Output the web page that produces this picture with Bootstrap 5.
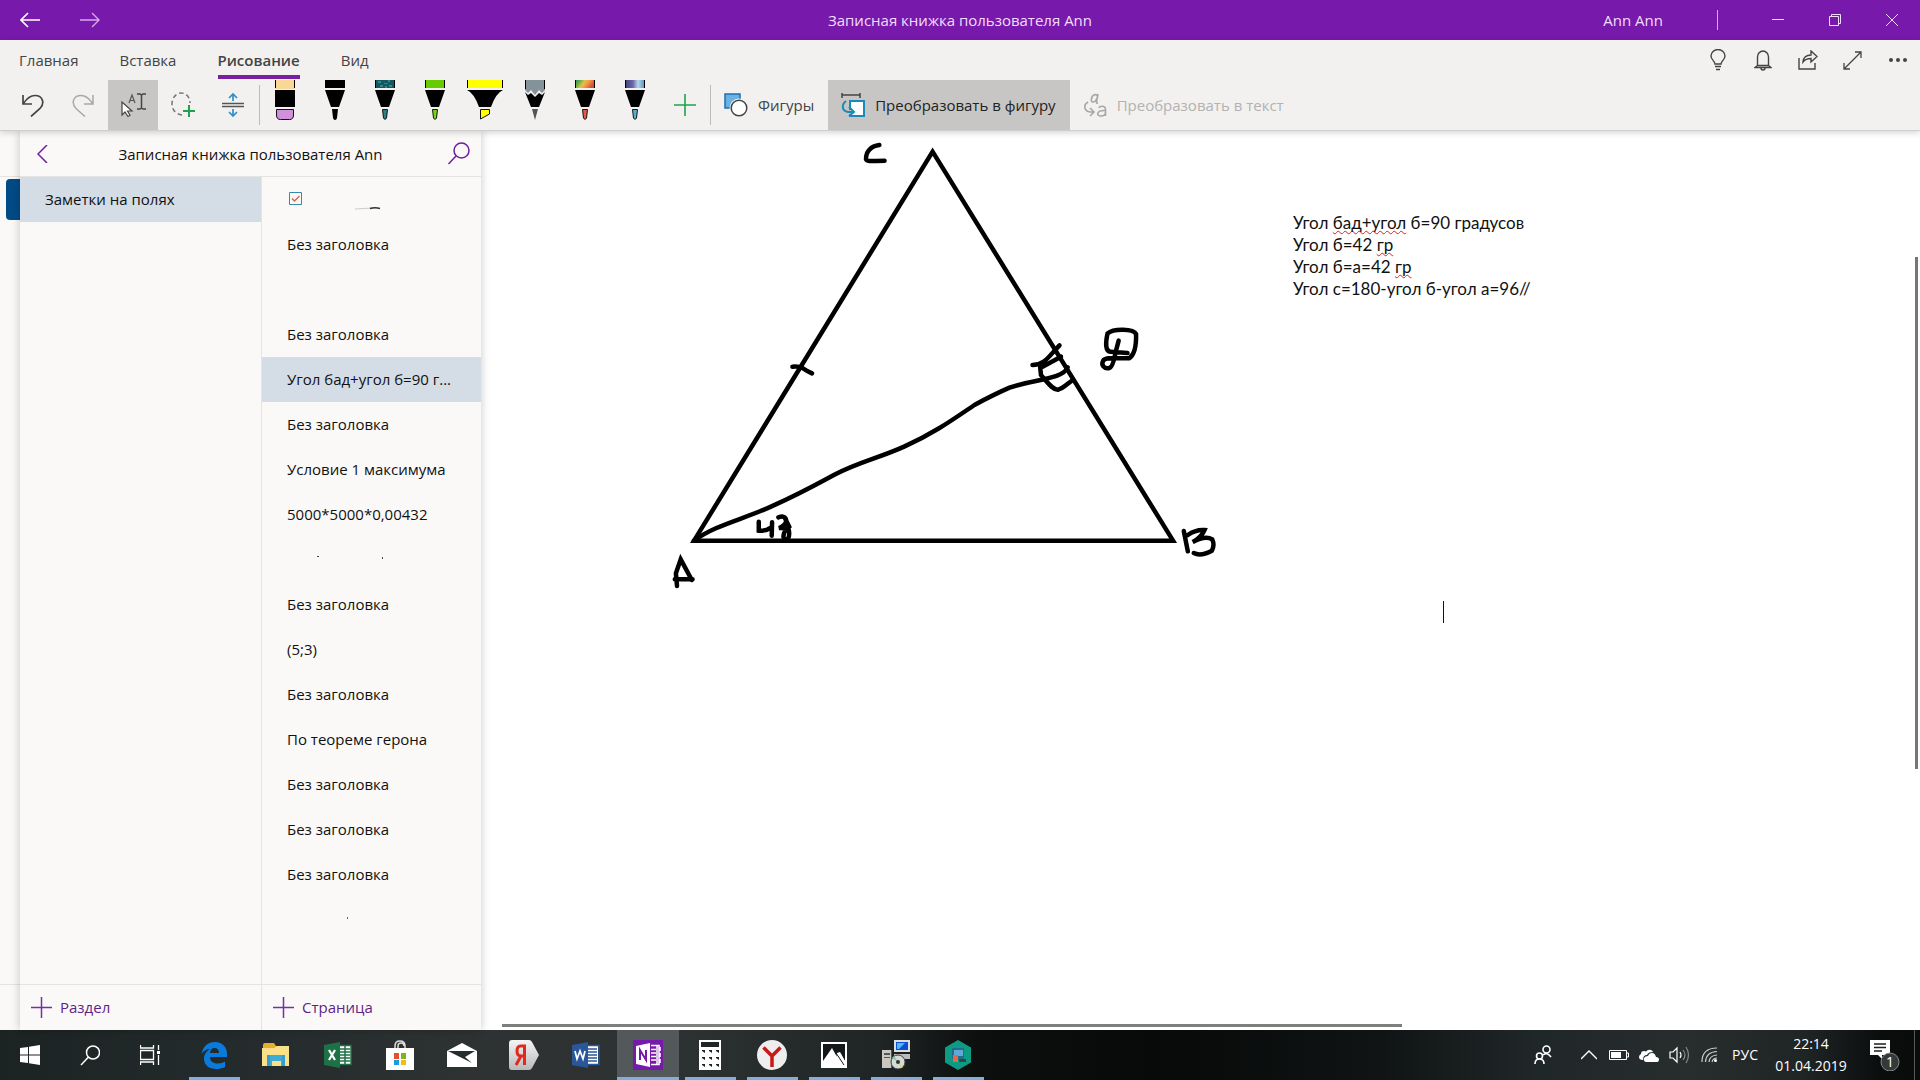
<!DOCTYPE html>
<html lang="ru">
<head>
<meta charset="utf-8">
<meta name="viewport" content="width=device-width, initial-scale=1">
<title>Записная книжка пользователя Ann</title>
<link href="https://cdn.jsdelivr.net/npm/bootstrap@5.3.0/dist/css/bootstrap.min.css" rel="stylesheet">
<style>
:root{--purple:#7719aa;--ribbon:#f2f1f0;--panel:#faf9f8;--sel:#d4dde6;--rule:#e6e4e3}
body{font-family:"Open Sans","Noto Sans",sans-serif;font-size:15px;line-height:20px;color:#111}
button{font:inherit;color:inherit;border:0;background:none;padding:0}
a{color:inherit;text-decoration:none}
svg{display:block;flex:none}
.titlebar{height:40px;background:var(--purple);color:#f3dcff}
.titlebar .caption{left:0;right:0}
.tbtn{width:60px;height:40px;display:flex;align-items:center;justify-content:center}
.wbtn{width:57px}
.userlink{margin-right:54px}
.tdiv{width:1px;height:20px;background:#d9a9ee;margin-right:7px}
.ribbon{background:var(--ribbon);color:#444;border-bottom:1px solid #cfcfcf;box-shadow:0 2px 6px rgba(0,0,0,.16);z-index:3}
.ribbon .nav{padding-left:-1px}
.ribbon .nav-link{padding:10px 0;margin:0 22px 0 19px;color:#444;height:40px;position:relative}
.ribbon .nav-link.active{font-weight:600}
.ribbon .nav-link.active::after{content:"";position:absolute;left:1px;right:0;bottom:1px;height:4px;background:#7a1fa0}
.quick{width:45px;height:40px;display:flex;align-items:center;justify-content:center}
.tools{height:50px;padding-left:8px}
.tool{width:50px;height:50px;display:flex;align-items:center;justify-content:center}
.tool.pressed,.wide.pressed{background:#c7c6c4;color:#222}
.sep{width:1px;height:40px;background:#bcbbba}
.pens{margin-left:1px}
.pen{width:50px;height:50px;display:flex;justify-content:center;align-items:flex-start}
.wide{height:50px;display:flex;align-items:center;gap:10px;padding:0 14px 0 13px}
.wide:disabled{color:#b3b2b1}
.strip{width:20px;background:var(--panel)}
.strip .head,.side .head{height:46px;border-bottom:1px solid var(--rule);flex:none}
.sidefoot{height:46px;border-top:1px solid var(--rule)}
.booktab{width:14px;height:41px;margin:2px 0 0 auto;background:#004b87;border-radius:4px 0 0 4px}
.side{width:461px;flex:none;background:var(--panel);box-shadow:0 0 9px rgba(0,0,0,.22);z-index:2}
.side .head button{width:44px;height:45px;display:flex;align-items:center;justify-content:center}
.sections{width:242px;flex:none;border-right:1px solid var(--rule)}
.side .list-group-item{height:45px;padding:12px 20px 12px 25px;border:0;border-radius:0;background:none;color:#111;white-space:nowrap}
.side .list-group-item.active{background:var(--sel);color:#111;margin:0}
.addbtn{width:100%;height:44px;display:flex;align-items:center;gap:8px;padding-left:11px;color:#5f1f87}
.sheet{background:#fff;min-width:0}
.ink{position:absolute;left:179px;top:-1px}
.ink path{vector-effect:non-scaling-stroke}
.note{position:absolute;left:812px;top:81px;font-family:Lato,"Open Sans",sans-serif;font-size:17px;line-height:22px;white-space:nowrap}
.note u{text-decoration:underline wavy #e02020 1px;text-underline-offset:1px;text-decoration-skip-ink:none}
.caret{position:absolute;left:962px;top:470px;width:1px;height:22px;background:#111}
.vbar{position:absolute;right:2px;top:126px;width:3px;height:57%;background:#767676}
.hbar{position:absolute;left:21px;bottom:3px;width:900px;height:3px;background:#7d7f7d}
.taskbar{height:50px;color:#fff;font-size:14px;background:linear-gradient(90deg,#1c2323 0,#242b2c 12%,#2e3233 25%,#2c3132 36%,#1f2425 46%,#0d0e0e 51%,#080909 60%,#101414 72%,#202728 80%,#282d2e 88%,#1f2425 94%,#0b0d0d 98%,#0a0b0b 100%)}
.sys{width:60px;height:50px;display:flex;align-items:center;justify-content:center}
.taskview{margin-right:3px}
.app{width:62px;height:50px;position:relative;display:flex;align-items:center;justify-content:center}
.app.running::after{content:"";position:absolute;left:6px;right:5px;bottom:0;height:3px;background:#80b0d9}
.app.front{background:#53585a}
.app.front::after{left:0;right:0}
.tray{height:50px;width:30px;display:flex;align-items:center;justify-content:center}
.clock{width:90px;line-height:22px}
.center{width:58px}
.peek{width:6px;border-left:1px solid #55595a}
</style>
<script src="https://cdn.jsdelivr.net/npm/bootstrap@5.3.0/dist/js/bootstrap.bundle.min.js" defer></script>
</head>
<body class="d-flex flex-column vh-100 overflow-hidden">

<header class="titlebar d-flex align-items-center position-relative">
  <button class="tbtn" aria-label="Назад"><svg width="20" height="16" fill="none" stroke="#fff" stroke-width="1.6"><path d="M20 8H1M8 1L1 8l7 7"/></svg></button>
  <button class="tbtn" aria-label="Вперёд"><svg width="20" height="16" fill="none" stroke="#d9a9ee" stroke-width="1.4"><path d="M0 8h19M12 1l7 7-7 7"/></svg></button>
  <div class="caption position-absolute text-center pe-none">Записная книжка пользователя Ann</div>
  <div class="ms-auto d-flex align-items-center">
    <a href="#" class="userlink">Ann Ann</a>
    <span class="tdiv"></span>
    <button class="tbtn wbtn ms-4" aria-label="Свернуть"><svg width="12" height="12" stroke="#f3dcff"><path d="M0 5.5h12"/></svg></button>
    <button class="tbtn wbtn" aria-label="Развернуть"><svg width="12" height="12" fill="none" stroke="#f3dcff"><path d="M.5 2.5h9v9h-9zM2.5 2V.5h9v9H10"/></svg></button>
    <button class="tbtn wbtn" aria-label="Закрыть"><svg width="12" height="12" stroke="#f3dcff"><path d="M0 0l12 12M12 0L0 12"/></svg></button>
  </div>
</header>

<div class="ribbon position-relative">
  <div class="d-flex justify-content-between">
    <nav class="nav">
      <a class="nav-link" href="#">Главная</a>
      <a class="nav-link" href="#">Вставка</a>
      <a class="nav-link active" aria-current="page" href="#">Рисование</a>
      <a class="nav-link" href="#">Вид</a>
    </nav>
    <div class="d-flex">
      <button class="quick" aria-label="Подсказка"><svg width="16" height="22" fill="none" stroke="#444" stroke-width="1.4"><path d="M5 15c0-3-4-4-4-8a7 6.500 0 0 1 14 0c0 4-4 5-4 8zM5 17.500h6M6 20.500h4"/></svg></button>
      <button class="quick" aria-label="Уведомления"><svg width="18" height="21" fill="none" stroke="#444" stroke-width="1.400"><path d="M3.500 15.500V7a5.500 6 0 0 1 11 0v8.500M1 17.500l2.500-2h11l2.500 2zM7 18a2 2 0 0 0 4 0"/></svg></button>
      <button class="quick" aria-label="Поделиться"><svg width="20" height="20" fill="none" stroke="#444" stroke-width="1.400"><path d="M1 8v11h16v-6M5 12c.5-5 4-7 8-7V1l6 5.500-6 5.500V8.500c-4 0-6 1-8 3.500z"/></svg></button>
      <button class="quick" aria-label="На весь экран"><svg width="19" height="19" fill="none" stroke="#444" stroke-width="1.300"><path d="M1 18L18 1M12 1h6v6M1 12v6h6"/></svg></button>
      <button class="quick" aria-label="Ещё"><svg width="20" height="6" fill="#444"><circle cx="3" cy="3" r="2"/><circle cx="10" cy="3" r="2"/><circle cx="17" cy="3" r="2"/></svg></button>
    </div>
  </div>
  <div class="tools d-flex align-items-center">
    <button class="tool" aria-label="Отменить"><svg width="22" height="23" fill="none" stroke="#444" stroke-width="1.700"><path d="M1 1v9h9M1.500 9.500C5 4 9 1.500 13 1.500c8 0 10 8 5 13L9 22.500"/></svg></button>
    <button class="tool" aria-label="Вернуть"><svg width="22" height="23" fill="none" stroke="#a9a8a7" stroke-width="1.500"><path d="M21 1v9h-9M20.500 9.500C17 4 13 1.500 9 1.500c-8 0-10 8-5 13l9 8"/></svg></button>
    <button class="tool pressed" aria-label="Выделить объекты"><svg width="26" height="26" viewBox="0 0 26 26"><path d="M2 10v13l3-3 3 4.500 2-1.200-2.500-4.300H12z" fill="#fff" stroke="#444" stroke-width="1.200"/><path d="M17 2h3l1.500 1L23 2h3M17 17h3l1.500-1 1.500 1h3M21.500 3v13" fill="none" stroke="#444" stroke-width="1.500"/><path d="M9 11l3-8 3 8M10 8.500h4" fill="none" stroke="#555" stroke-width="1.200"/></svg></button>
    <button class="tool" aria-label="Лассо"><svg width="26" height="26" viewBox="0 0 26 26" fill="none"><path d="M12 23C5 22 2 17 2 12 2 6 6 1 11 1c6 0 9 5 9 10" stroke="#777" stroke-width="1.500" stroke-dasharray="4.500 3"/><path d="M13 19h12M19 13v12" stroke="#1fa34a" stroke-width="2"/></svg></button>
    <button class="tool" aria-label="Вставить пространство"><svg width="22" height="26" viewBox="0 0 22 26" fill="none"><path d="M0 11.500h22M0 14.500h22" stroke="#555" stroke-width="1.500"/><path d="M11 9V2M7 6l4-4 4 4M11 17v7M7 20l4 4 4-4" stroke="#2e8fcb" stroke-width="1.700"/></svg></button>
    <div class="pens d-flex align-items-center">
    <span class="sep"></span>
    <button class="pen" aria-label="Ластик"><svg width="20" height="41"><path fill="#f8d896" d="M0 0h20v9H0z"/><path fill="#000" d="M0 0h1v8H0zM19 0h1v8h-1zM0 10h20v17H0z"/><path d="M1.500 29.500h17V35q0 4.500-4 4.500h-9q-4 0-4-4.500z" fill="#d090dc" stroke="#111"/></svg></button>
    <button class="pen" aria-label="Чёрное перо"><svg width="20" height="41"><path d="M0 0h20v8H0zM0 10h20l-6 17H6zM7 29h6l-1 9q-.5 2-2 2t-2-2z"/></svg></button>
    <button class="pen" aria-label="Бирюзовое перо"><svg width="20" height="41"><path fill="#145860" d="M0 0h20v8H0z"/><path fill="#31898c" d="M3 1h3v2H3zM9 3h4v1H9zM14 5h3v2h-3zM5 5h3v2H5zM13 0h2v2h-2zM10 6h2v2h-2z"/><path d="M0 0h1v8H0zM19 0h1v8h-1zM0 10h20l-6 17H6z"/><path d="M7.500 29.500h5L11.500 38q-1.500 3-3 0z" fill="#2d8088" stroke="#111"/></svg></button>
    <button class="pen" aria-label="Зелёное перо"><svg width="20" height="41"><path fill="#66cc00" d="M0 0h20v8H0z"/><path d="M0 0h1v8H0zM19 0h1v8h-1zM0 10h20l-6 17H6z"/><path d="M7.500 29.500h5L11.500 38q-1.500 3-3 0z" fill="#76d810" stroke="#111"/></svg></button>
    <button class="pen" aria-label="Жёлтый маркер"><svg width="36" height="41"><path fill="#ff0" d="M0 0h36v8H0z"/><path d="M0 0h1v8H0zM35 0h1v8h-1zM0 10h36q-7 3-12 17H12Q7 13 0 10z"/><path d="M13.500 29.500h9V34l-9 5z" fill="#ff0" stroke="#111"/></svg></button>
    <button class="pen" aria-label="Карандаш"><svg width="20" height="41"><path fill="#84929a" d="M0 0h20v10l-3 3-3-3-4 5-4-5-3 3-3-3z"/><path d="M0 0h1v9H0zM19 0h1v9h-1zM0 12l3 3 3-2 4 4 4-4 3 2 3-3-6 15H6z"/><path d="M7 29h6l-3 11z" fill="#555"/></svg></button>
    <button class="pen" aria-label="Радужное перо"><svg width="20" height="41"><defs><linearGradient id="rb" y2=".3"><stop stop-color="#35806a"/><stop offset=".25" stop-color="#5fae48"/><stop offset=".5" stop-color="#e8c04c"/><stop offset=".75" stop-color="#f08a40"/><stop offset="1" stop-color="#d84a38"/></linearGradient></defs><path fill="url(#rb)" d="M0 0h20v8H0z"/><path d="M0 0h1v8H0zM19 0h1v8h-1zM0 10h20l-6 17H6z"/><path d="M7.500 29.500h5L11.500 38q-1.500 3-3 0z" fill="#e85a48" stroke="#111"/></svg></button>
    <button class="pen" aria-label="Перо «Галактика»"><svg width="20" height="41"><defs><linearGradient id="gx"><stop stop-color="#3a3f78"/><stop offset=".4" stop-color="#6f6aa8"/><stop offset=".65" stop-color="#b8d8ea"/><stop offset="1" stop-color="#4a90c0"/></linearGradient></defs><path fill="url(#gx)" d="M0 0h20v8H0z"/><path d="M0 0h1v8H0zM19 0h1v8h-1zM0 10h20l-6 17H6z"/><path d="M7.500 29.500h5L11.500 38q-1.500 3-3 0z" fill="#5bb0d0" stroke="#111"/></svg></button>
    <button class="tool" aria-label="Добавить перо"><svg width="22" height="22" stroke="#1fa34a" stroke-width="1.600"><path d="M0 11h22M11 0v22"/></svg></button>
    <span class="sep"></span>
    </div>
    <button class="wide"><svg width="24" height="24" viewBox="0 0 24 24"><path d="M1 1h15v14H1z" fill="#6cb0e4" stroke="#1b6fb5" stroke-width="1.500"/><circle cx="15" cy="15" r="9.500" fill="#f2f1f0"/><circle cx="15" cy="15" r="7.800" fill="#fff" stroke="#444" stroke-width="1.500"/></svg>Фигуры</button>
    <button class="wide pressed"><svg width="24" height="24" viewBox="0 0 24 24" fill="none"><path d="M9 8h14v15H9z" fill="#fff" stroke="#1a8ab8" stroke-width="2"/><path d="M1 2h18M1 0v5M19 0v5" stroke="#444" stroke-width="1.500"/><path d="M4 8c-4 4-3 10 3 11h5" stroke="#c7c6c4" stroke-width="4"/><path d="M5 8c-5 4-4 10 2 11h4M8 14l5 5-5 4" stroke="#1a8ab8" stroke-width="2"/></svg>Преобразовать в фигуру</button>
    <button class="wide" disabled><svg width="24" height="24" viewBox="0 0 24 24" fill="none" stroke="#a8a7a6" stroke-width="1.600"><path d="M15 1l-1.500 8q0 1.500 1.500 1M14.500 3.500c-1-3-5-2.500-6 2s3 5 5.500 0M15.500 14.500c4-2 7-1.500 7 2v6.500M22.500 17.500c-10-.5-9 6-4.500 5.500 3 0 4.500-2 4.500-4M5 9c-5 3-4 9 2 10h3M7 15l4 4-4 4"/></svg>Преобразовать в текст</button>
  </div>
</div>

<div class="d-flex flex-grow-1" style="min-height:0">
  <div class="strip d-flex flex-column"><div class="head"></div><div class="booktab"></div><div class="sidefoot mt-auto"></div></div>

  <aside class="side d-flex flex-column position-relative">
    <div class="head d-flex align-items-center justify-content-between">
      <button aria-label="Назад к записным книжкам"><svg width="11" height="18" fill="none" stroke="#6d1f9c" stroke-width="1.500"><path d="M10 0L1 9l9 9"/></svg></button>
      <span>Записная книжка пользователя Ann</span>
      <button aria-label="Поиск"><svg width="22" height="23" fill="none" stroke="#6d1f9c" stroke-width="1.500"><circle cx="13.500" cy="8.500" r="7.500"/><path d="M8 14l-7.500 8"/></svg></button>
    </div>
    <div class="d-flex flex-grow-1" style="min-height:0">
      <div class="sections d-flex flex-column">
        <div class="list-group"><a href="#" class="list-group-item active">Заметки на полях</a></div>
        <div class="sidefoot mt-auto"><button class="addbtn"><svg width="21" height="21" stroke="#7a2ca8" stroke-width="1.500"><path d="M0 10.500h21M10.500 0v21"/></svg>Раздел</button></div>
      </div>
      <div class="pages d-flex flex-column flex-grow-1" style="min-width:0">
        <div class="list-group">
          <a href="#" class="list-group-item" aria-label="Страница с флажком"><svg width="100" height="22" viewBox="0 0 100 22" fill="none"><path d="M2.500 3.500h12v12h-12z" stroke="#3d86ac"/><path d="M5 9.500l2.500 2.500 5-5" stroke="#d66a4a" stroke-width="1.500"/><path d="M68 20l18-1" stroke="#ccc"/><path d="M83 19.500q5-1.500 10 0" stroke="#333" stroke-width="1.500"/></svg></a>
          <a href="#" class="list-group-item">Без заголовка</a>
          <a href="#" class="list-group-item" aria-label="Пустая страница"></a>
          <a href="#" class="list-group-item">Без заголовка</a>
          <a href="#" class="list-group-item active">Угол бад+угол б=90 г...</a>
          <a href="#" class="list-group-item">Без заголовка</a>
          <a href="#" class="list-group-item">Условие 1 максимума</a>
          <a href="#" class="list-group-item">5000*5000*0,00432</a>
          <a href="#" class="list-group-item" aria-label="Рукописная страница"><svg width="100" height="20"><path d="M30 7h2v1h-2zM95 8h1v2h-1z" fill="#444"/></svg></a>
          <a href="#" class="list-group-item">Без заголовка</a>
          <a href="#" class="list-group-item">(5;3)</a>
          <a href="#" class="list-group-item">Без заголовка</a>
          <a href="#" class="list-group-item">По теореме герона</a>
          <a href="#" class="list-group-item">Без заголовка</a>
          <a href="#" class="list-group-item">Без заголовка</a>
          <a href="#" class="list-group-item">Без заголовка</a>
          <a href="#" class="list-group-item" aria-label="Рукописная страница"><svg width="100" height="20"><path d="M60 8h1v2h-1z" fill="#666"/></svg></a>
        </div>
        <div class="sidefoot mt-auto"><button class="addbtn"><svg width="21" height="21" stroke="#7a2ca8" stroke-width="1.500"><path d="M0 10.500h21M10.500 0v21"/></svg>Страница</button></div>
      </div>
    </div>
  </aside>

  <main class="sheet flex-grow-1 position-relative overflow-hidden">
    <svg class="ink" width="580" height="470" viewBox="0 0 1568 1410" preserveAspectRatio="none" fill="none" stroke="#000" stroke-width="4.500" stroke-linecap="round" stroke-linejoin="miter">
      <path d="M737 65L92 1232H1387z"/>
      <path d="M92 1232C150 1185 220 1170 300 1130C380 1090 420 1065 470 1035C540 995 590 985 660 950C740 910 790 870 850 825C900 795 920 785 945 773C1010 748 1090 748 1102 712"/>
      <path d="M358 710Q375 708 385 714Q395 722 411 730"/>
      <path d="M1007 705C1040 705 1050 680 1080 646M1084 680L1028 714L1030 735C1050 760 1062 780 1076 779C1090 776 1100 762 1116 750"/>
      <path d="M1240 632L1232 665C1228 690 1222 712 1215 714C1200 718 1192 705 1198 692C1205 680 1230 686 1268 685C1282 675 1288 650 1287 612C1280 595 1225 595 1210 610C1204 640 1204 664 1218 665L1264 669"/>
      <path d="M593 45C570 48 556 65 557 88C560 97 580 92 607 92"/>
      <path d="M46 1368L43 1330L56 1288L86 1350M40 1348L88 1348"/>
      <path d="M267 1175L267 1202Q285 1205 300 1193M303 1177L302 1217M320 1162Q338 1155 341 1170Q342 1184 322 1194L347 1195Q352 1215 346 1226Q338 1233 334 1222Q332 1205 349 1190L338 1165"/>
      <path d="M1416 1203L1427 1264M1427 1215Q1448 1198 1472 1200Q1462 1225 1440 1236Q1475 1215 1493 1228Q1500 1245 1492 1262Q1462 1280 1443 1269"/>
    </svg>
    <div class="note">
      <div>Угол <u>бад+угол</u> б=90 градусов</div>
      <div>Угол б=42 <u>гр</u></div>
      <div>Угол б=а=42 <u>гр</u></div>
      <div>Угол с=180-угол б-угол а=96//</div>
    </div>
    <div class="caret"></div>
    <div class="vbar"></div>
    <div class="hbar"></div>
  </main>
</div>

<footer class="taskbar d-flex">
  <button class="sys" aria-label="Пуск"><svg width="20" height="20" fill="#fff"><path d="M0 3l8-1v7.500H0zM9 1.800L20 0v9.500H9zM0 10.500h8V18l-8-1zM9 10.500h11V20L9 18.200z"/></svg></button>
  <button class="sys" aria-label="Поиск"><svg width="20" height="21" fill="none" stroke="#fff" stroke-width="1.500"><circle cx="13" cy="7.500" r="6.500"/><path d="M8.500 12L1 20"/></svg></button>
  <button class="sys taskview" aria-label="Представление задач"><svg width="20" height="20" fill="none" stroke="#fff" stroke-width="1.300"><path d="M.5 5.500h13v9H.5zM.5 0v3h13V0M.5 20v-3h13v3M18.500 0v5M18.500 10v10"/><path d="M17 6h3v3h-3z" fill="#fff" stroke="none"/></svg></button>
  <button class="app running" aria-label="Edge"><svg width="26" height="27" viewBox="0 0 26 27"><path fill="#0a7bdc" d="M.5 12C2 4 7 0 14 0c8 0 12 6 12 12v3H9c0 5 4 6.500 8 6.500 3 0 5-.8 7-2V25c-3 1.500-6 2-9 2C8 27 3 23 3 16.500 3 12 6 8.500 9.500 7 5.500 7 2 9 .5 12zM9 11h9c0-3-1.500-5-4.500-5S9.500 8 9 11z"/></svg></button>
  <button class="app" aria-label="Проводник"><svg width="28" height="24"><path fill="#e8ae2e" d="M1 2q0-2 2-2h9l2 3h13v7H1z"/><path fill="#fbe08a" d="M0 5h12l3-2h12v20H0z"/><path fill="#3fabd8" d="M5 23V12h18v11h-4v-5h-9v5z"/><path fill="#2a8dbb" d="M5 12h3v11H5zM20 12h3v11h-3z" opacity=".4"/></svg></button>
  <button class="app" aria-label="Excel"><svg width="28" height="26"><path fill="#fff" d="M14 3h13v20H14z"/><path fill="#1d7245" d="M0 3l16-3v26L0 23z"/><path stroke="#1d7245" stroke-width="1.500" fill="none" d="M16 3.500h11v19H16M16 7h10M16 10h10M16 13h10M16 16h10M16 19h10M21 4v18"/><path stroke="#fff" stroke-width="2.200" d="M5 8l6 10M11 8L5 18"/></svg></button>
  <button class="app" aria-label="Microsoft Store"><svg width="30" height="30"><path fill="none" stroke="#ddd" stroke-width="1.500" d="M10 8V6q0-5 5-5t5 5v2M13 8V6q0-3 3-3t3 3"/><path fill="#fff" d="M1 8h28v22H1z"/><path fill="#e8502a" d="M9 13h5v6H9z"/><path fill="#7cb61b" d="M16 13h5v6h-5z"/><path fill="#1a9ae0" d="M9 20h5v5H9z"/><path fill="#f0bd1c" d="M16 20h5v5h-5z"/></svg></button>
  <button class="app" aria-label="Почта"><svg width="30" height="24"><path fill="#fff" d="M0 8L15 0l15 8v16H0z"/><path fill="#272c2d" d="M1 8h27l-10 6 7 6L13 14z"/></svg></button>
  <button class="app" aria-label="Яндекс"><svg width="30" height="30"><defs><linearGradient id="ya" x2="0" y2="1"><stop stop-color="#f4f4f4"/><stop offset="1" stop-color="#b9b9b9"/></linearGradient></defs><path fill="url(#ya)" d="M3 0h17q2 0 3 2l7 13-7 13q-1 2-3 2H3q-3 0-3-3V3q0-3 3-3z"/><path fill="none" stroke="#e02a20" stroke-width="3" d="M15.500 25V6h-4Q8 6 8 11t4 5h3M12 16L7 25"/></svg></button>
  <button class="app" aria-label="Word"><svg width="28" height="26"><path fill="#fff" d="M14 3h12v20H14z"/><path fill="#2a579a" d="M0 3l16-3v26L0 23z"/><path stroke="#2a579a" stroke-width="1.500" fill="none" d="M16 3.500h11v19H16M16 7h9M16 10h9M16 13h9M16 16h9M16 19h9"/><path stroke="#fff" stroke-width="1.700" fill="none" d="M3 9l2 8 3-8 3 8 2-8"/></svg></button>
  <button class="app running front" aria-label="OneNote"><svg width="30" height="30"><path fill="#7719aa" d="M0 0h30v30H0z"/><path fill="#fff" d="M3 6l14-3v24L3 24z"/><path stroke="#fff" stroke-width="1.500" fill="none" d="M18 5.500h8v19h-8M18 9.500h5M18 13h5M18 16.500h5M18 20h5M24 5v20M27 7v4M27 13v4M27 19v4"/><path stroke="#7719aa" stroke-width="2" fill="none" d="M7 20V10l6 10V10"/></svg></button>
  <button class="app running" aria-label="Калькулятор"><svg width="22" height="30"><path fill="#fff" d="M0 0h22v30H0z"/><path fill="#1f2526" d="M2 2h18v5H2zM3 10h3v3l-3-2zM10 10h3v3l-3-2zM17 10h3v3l-3-2zM3 17h3v3l-3-2zM10 17h3v3l-3-2zM17 17h3v3l-3-2zM3 24h3v3l-3-2zM10 24h3v3l-3-2zM17 24h3v3l-3-2z"/></svg></button>
  <button class="app running" aria-label="Яндекс.Браузер"><svg width="30" height="30"><circle cx="15" cy="15" r="15" fill="#eee"/><path d="M6.500 7.500L15 16l8.500-8.500M15 15v12" stroke="#c81818" stroke-width="3.500" fill="none"/></svg></button>
  <button class="app running" aria-label="Фотографии"><svg width="26" height="26"><path fill="#fff" d="M0 0h26v26H0z"/><path fill="#151818" d="M2 2h22v17l-5-8-3 4-5-9-9 13z"/><path fill="#fff" d="M16 11l3-1 5 9v4H14z"/><path stroke="#151818" d="M15 11l8 12"/></svg></button>
  <button class="app running" aria-label="Установщик"><svg width="28" height="30"><path fill="#c8c8c0" d="M0 10h10v18H0z"/><path fill="#555" d="M2 13h6v2H2zM2 17h6v1H2zM9 10h1v18H9z"/><path fill="#ddd" d="M12 0h16v12H12z"/><path fill="#bbb" d="M12 14h16v5H12z"/><path fill="#0a50d0" d="M14 2h12v8H14z"/><path fill="#50b8f8" d="M15 3h8l-6 6h-2z"/><circle cx="16" cy="22" r="7" fill="#d5dcd5" stroke="#444"/><path fill="#7fc8a0" d="M16 22l-6-4 2-2z"/><path fill="#e0d860" d="M16 22l5 5-2 1z"/><circle cx="16" cy="22" r="2" fill="#333"/></svg></button>
  <button class="app running" aria-label="BlueStacks"><svg width="28" height="30"><path fill="#0d9c83" d="M14 0l13 7.500v15L14 30 1 22.500v-15z"/><path fill="#256b8b" d="M8 8h12v11H8z"/><path fill="#5fa8d8" d="M10 10h9v6h-9z"/><path fill="#e3694a" d="M9 15h5v7H9z"/><path fill="#344" d="M15 19h7v3h-7z"/></svg></button>

  <div class="ms-auto d-flex align-items-center">
    <button class="tray me-3" aria-label="Люди"><svg width="18" height="20" fill="none" stroke="#fff" stroke-width="1.600"><circle cx="12.500" cy="4.500" r="3.500"/><circle cx="5.500" cy="11" r="3"/><path d="M1 19q0-5 4.500-5t4.500 5M9 10q4-3.500 8 2"/></svg></button>
    <button class="tray" aria-label="Скрытые значки"><svg width="16" height="10" fill="none" stroke="#fff" stroke-width="1.400"><path d="M0 9l8-8 8 8"/></svg></button>
    <button class="tray" aria-label="Батарея"><svg width="20" height="12"><path d="M.5 1.500h17v9H.5zM18 4h1.500v4H18" fill="none" stroke="#fff"/><path fill="#fff" d="M2 3h10v6H2z"/></svg></button>
    <button class="tray" aria-label="OneDrive"><svg width="20" height="13" fill="#fff"><path d="M4 11Q0 11 0 8q0-2 2-3 0-3 3-3 1 0 2 .5Q9 0 12 1q2 1 2 2-5 0-6 3-4 0-4 5z"/><path d="M7 13q-3-1-2-4 1-2 4-2 1-3 4-3t4 4q3 0 3 2.500T18 13z"/></svg></button>
    <button class="tray" aria-label="Громкость"><svg width="21" height="18" fill="none" stroke="#fff" stroke-width="1.200"><path d="M1 6h3l4-4v14l-4-4H1z"/><path d="M11 6q2 3 0 6" /><path d="M14 4q4 5 0 10M17 1q5 8 0 16" stroke="#888"/></svg></button>
    <button class="tray" aria-label="Сеть"><svg width="17" height="16" fill="none" stroke="#ccc" stroke-width="1.200"><path d="M1 15Q1 1 16 1M4.500 15Q5 5 16 4.500M8 15q.5-6.500 8-7M11 15q1-4 5-4"/><circle cx="14.500" cy="13.500" r="1.500" fill="#fff" stroke="none"/></svg></button>
    <button class="px-2">РУС</button>
    <button class="clock text-center"><span class="d-block">22:14</span><span class="d-block">01.04.2019</span></button>
    <button class="sys center" aria-label="Уведомления: 1"><svg width="30" height="32" viewBox="0 0 30 32"><path fill="#fff" d="M0 1h20v15h-8v4l-4-4H0z"/><path stroke="#1a1e1f" stroke-width="1.300" d="M4 5h12M4 8.500h12M4 12h8"/><circle cx="20" cy="23" r="9" fill="#35393a" stroke="#888"/><text x="20" y="28" fill="#fff" font-size="14" text-anchor="middle">1</text></svg></button>
    <div class="peek align-self-stretch"></div>
  </div>
</footer>
</body>
</html>
